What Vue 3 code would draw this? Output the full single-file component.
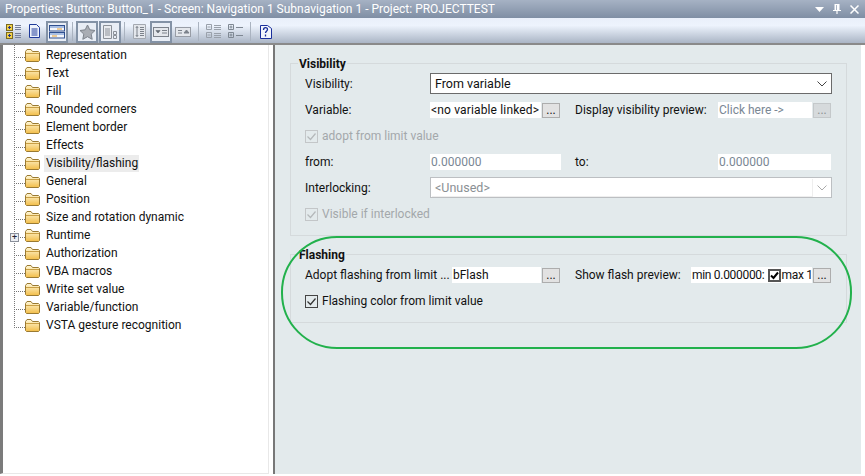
<script setup>
const nodes = [
  "Representation", "Text", "Fill", "Rounded corners", "Element border", "Effects",
  "Visibility/flashing", "General", "Position", "Size and rotation dynamic", "Runtime",
  "Authorization", "VBA macros", "Write set value", "Variable/function", "VSTA gesture recognition",
];
</script>

<template>
  <div class="window">
    <header class="titlebar">
      <span>Properties: Button: Button_1 - Screen: Navigation 1 Subnavigation 1 - Project: PROJECTTEST</span>
      <div class="title-icons">
        <svg width="9" height="5" viewBox="0 0 9 5"><path d="M0 0h9L4.500 5z" fill="#fff" /></svg>
        <svg width="8" height="10" viewBox="0 0 8 10"><path d="M1.500 0h5v6H8v1H0V6h1.500zM3 1v5h.8V1zM3.400 7h1.200v3H3.400z" fill="#fff" fill-rule="evenodd" /></svg>
        <svg width="9" height="9" viewBox="0 0 9 9"><path d="M.5.500l8 8M8.500.500l-8 8" stroke="#fff" stroke-width="1.500" /></svg>
      </div>
    </header>

    <div class="toolbar">
      <div class="tool">
        <svg width="16" height="15" viewBox="0 0 16 15">
          <rect x=".5" y=".5" width="6" height="6" fill="#f3d24a" stroke="#7a6a20" />
          <rect x=".5" y="8.500" width="6" height="6" fill="#f3d24a" stroke="#7a6a20" />
          <path d="M2 3.500h3M3.500 2v3M2 11.500h3M3.500 10v3" stroke="#26348c" />
          <path d="M9 1.500h6M9 3.500h6M9 5.500h6M9 9.500h6M9 11.500h6M9 13.500h6" stroke="#76809a" />
        </svg>
      </div>
      <div class="tool narrow">
        <svg width="13" height="15" viewBox="0 0 13 15">
          <path d="M2.500 2.500h8v12h-8z" fill="#b9bfe8" />
          <path d="M.5.500h7l3 3v10h-10z" fill="#eef3fb" stroke="#1e3a9a" />
          <path d="M2.500 5h6M2.500 7h6M2.500 9h6M2.500 11h6" stroke="#1e3a9a" />
        </svg>
      </div>
      <div class="tool active">
        <svg width="16" height="14" viewBox="0 0 16 14">
          <rect x=".5" y=".5" width="15" height="5.500" fill="#f4f6fb" stroke="#2f4f8f" />
          <path d="M1 2h14" stroke="#5f88cc" />
          <path d="M8 4h5" stroke="#e8a030" />
          <rect x=".5" y="7.500" width="15" height="5.500" fill="#f4f6fb" stroke="#2f4f8f" />
          <path d="M1 9h14" stroke="#5f88cc" />
          <path d="M3 11h5" stroke="#e8a030" />
        </svg>
      </div>
      <i class="tool-sep sep-a"></i>
      <div class="tool active off">
        <svg width="17" height="16" viewBox="0 0 17 16"><path d="M8.500 1l2.300 4.800 5.200.7-3.800 3.600 1 5.200-4.700-2.600-4.700 2.600 1-5.200L1 6.500l5.200-.7z" fill="#a9adb4" stroke="#7d838c" /></svg>
      </div>
      <div class="tool active off doc-tool">
        <svg width="16" height="16" viewBox="0 0 16 16">
          <path d="M1.500 1.500h8v13h-8z" fill="#e9ebef" stroke="#8b9098" />
          <path d="M3 5h5M3 7h5M3 9h5M3 11h5" stroke="#8b9098" />
          <path d="M11.500 7.500h3v3h-3zM11.500 11.500h3v3h-3z" fill="none" stroke="#8b9098" />
        </svg>
      </div>
      <i class="tool-sep sep-b"></i>
      <div class="tool narrow off">
        <svg width="13" height="15" viewBox="0 0 13 15">
          <path d="M.5.500h12v14H.5z" fill="#e4e7ec" stroke="#a4a9b1" />
          <path d="M4 2.500v10M2.800 4L4 2.500 5.200 4M2.800 11L4 12.500 5.200 11M7 3.500h4M7 5.500h4M7 7.500h4M7 9.500h4M7 11.500h4" fill="none" stroke="#7c828b" />
        </svg>
      </div>
      <div class="tool active off">
        <svg width="16" height="10" viewBox="0 0 16 10">
          <rect x=".5" y=".5" width="15" height="9" fill="#e4e7ec" stroke="#7c828b" />
          <path d="M3 3.500h4L5 6zM9 3.500h5M9 6h5" fill="#596069" stroke="#7c828b" />
        </svg>
      </div>
      <div class="tool off">
        <svg width="16" height="10" viewBox="0 0 16 10">
          <rect x=".5" y=".5" width="15" height="9" fill="#e4e7ec" stroke="#989da6" />
          <path d="M3 3.500h4M3 6h4M9 6h5L11.500 3z" fill="#7c828b" stroke="#7c828b" />
        </svg>
      </div>
      <i class="tool-sep"></i>
      <div class="tool narrow off">
        <svg width="15" height="15" viewBox="0 0 15 15">
          <path d="M.5.500h5v5h-5zM.5 8.500h5v5h-5zM8 1.500h7M8 3.500h7M8 5.500h7M8 9.500h7M8 11.500h7M8 13.500h7M1.500 3h3M1.500 11h3" fill="none" stroke="#99a0aa" />
        </svg>
      </div>
      <div class="tool off">
        <svg width="15" height="15" viewBox="0 0 15 15">
          <path d="M.5.500h5v5h-5zM.5 8.500h5v5h-5zM8 3.500h7M8 11.500h7M1.500 3h3M3 1.500v3M1.500 11h3M3 9.500v3" fill="none" stroke="#7f8893" />
        </svg>
      </div>
      <i class="tool-sep"></i>
      <div class="tool narrow">
        <svg width="12" height="16" viewBox="0 0 12 16">
          <path d="M.5 1.500h7l4 3v10H.5z" fill="#f3f6fc" stroke="#1a2f9c" />
          <path d="M3.500 6c0-3 4-3 4-.5 0 1.700-2 1.700-2 3.500M5.500 10.500v2" fill="none" stroke="#1a2f9c" stroke-width="1.300" />
        </svg>
      </div>
    </div>

    <div class="body">
      <nav class="tree">
        <ul class="nodes">
          <li v-for="name in nodes" :key="name" class="node">
            <span class="expander" v-if="name === 'Runtime'">+</span>
            <svg class="folder" width="15" height="13" viewBox="0 0 15 13">
              <defs>
                <linearGradient id="fold" x1="0" y1="0" x2="0" y2="1">
                  <stop offset="0" stop-color="#fff8d8" />
                  <stop offset="1" stop-color="#f2bd48" />
                </linearGradient>
              </defs>
              <path d="M.5 11.500v-9l1.500-2h4l1.500 2h6l1 1v8l-1 1h-12z" fill="url(#fold)" stroke="#9a7a32" />
              <path d="M1 4.500h13" stroke="#c99f45" />
            </svg>
            <span class="node-label" :class="{ selected: name === 'Visibility/flashing' }">{{ name }}</span>
          </li>
        </ul>
      </nav>

      <main class="panel">
        <section class="group group-visibility">
          <h3>Visibility</h3>
          <div class="row row-top">
            <label>Visibility:</label>
            <div class="combo">From variable
              <svg width="10" height="6" viewBox="0 0 10 6"><path d="M.5.500L5 5 9.500.500" fill="none" stroke="#444" /></svg>
            </div>
          </div>
          <div class="row row-fields">
            <label>Variable:</label>
            <div class="input-btn">
              <span class="input wide-text">&lt;no variable linked&gt;</span><button>...</button>
            </div>
            <label class="second">Display visibility preview:</label>
            <div class="input-btn">
              <span class="input muted">Click here -&gt;</span><button disabled>...</button>
            </div>
          </div>
          <div class="check off row-adopt">
            <span class="box"><svg width="11" height="11" viewBox="0 0 11 11"><path d="M1.500 5.500l3 3 5-6" fill="none" stroke="currentColor" stroke-width="1.200" /></svg></span>adopt from limit value
          </div>
          <div class="row row-fields row-from">
            <label>from:</label>
            <span class="input muted">0.000000</span>
            <label class="second">to:</label>
            <span class="input muted end-input">0.000000</span>
          </div>
          <div class="row row-top row-lock">
            <label>Interlocking:</label>
            <div class="combo off"><span class="combo-text">&lt;Unused&gt;</span>
              <svg width="10" height="6" viewBox="0 0 10 6"><path d="M.5.500L5 5 9.500.500" fill="none" stroke="#aaa" /></svg>
            </div>
          </div>
          <div class="check off row-vis">
            <span class="box"><svg width="11" height="11" viewBox="0 0 11 11"><path d="M1.500 5.500l3 3 5-6" fill="none" stroke="currentColor" stroke-width="1.200" /></svg></span>Visible if interlocked
          </div>
        </section>

        <section class="group group-flash">
          <h3>Flashing</h3>
          <div class="row row-flash">
            <label>Adopt flashing from limit ...</label>
            <div class="input-btn">
              <span class="input">bFlash</span><button>...</button>
            </div>
            <label class="second">Show flash preview:</label>
            <div class="input-btn">
              <span class="input preview">min 0.000000:<span class="box dark"><svg width="9" height="9" viewBox="0 0 9 9"><path d="M1 4.500l2.500 2.500L8 1.500" fill="none" stroke="currentColor" stroke-width="2" /></svg></span>max 1</span><button>...</button>
            </div>
          </div>
          <div class="check row-color">
            <span class="box strong"><svg width="11" height="11" viewBox="0 0 11 11"><path d="M1.500 5.500l3 3 5-6" fill="none" stroke="currentColor" stroke-width="1.200" /></svg></span>Flashing color from limit value
          </div>
        </section>

        <div class="highlight"></div>
      </main>
    </div>
  </div>
</template>

<style>
body {
  margin: 0;
  background: #fff;
}
</style>

<style scoped>
.window {
  width: 865px;
  height: 476px;
  display: flex;
  flex-direction: column;
  overflow: hidden;
  font-family: Roboto, "Liberation Sans", sans-serif;
  font-size: 12px;
  color: #111;
}
.titlebar {
  height: 18px;
  flex: none;
  padding-left: 5px;
  display: flex;
  align-items: center;
  justify-content: space-between;
  background: linear-gradient(#a6b2c4, #7f8ea4);
  color: #fff;
  line-height: 18px;
}
.title-icons {
  display: flex;
  align-items: center;
  gap: 9px;
  padding-right: 6px;
}
.toolbar {
  height: 27px;
  flex: none;
  display: flex;
  align-items: center;
  padding: 2px 0 0 3px;
  background: linear-gradient(#e9effa 0, #edf3fd 30%, #aab5c5 100%);
  border-bottom: 2px solid #8a8a8a;
  box-sizing: border-box;
}
.tool {
  width: 22px;
  height: 22px;
  flex: none;
  display: flex;
  align-items: center;
  justify-content: center;
  box-sizing: border-box;
}
.tool.narrow {
  width: 21px;
}
.tool.active {
  border: 2px solid #8392a6;
  background: #e8edf5;
}
.doc-tool {
  margin-left: 1px;
}
.tool-sep {
  width: 1px;
  height: 19px;
  flex: none;
  margin: 0 4px;
  background: #aab3c0;
}
.tool-sep.sep-a {
  margin: 0 3px 0 4px;
}
.tool-sep.sep-b {
  margin: 0 4px 0 3px;
}
.body {
  flex: 1;
  display: flex;
  min-height: 0;
  padding-bottom: 2px;
}
.tree {
  width: 265px;
  flex: none;
  border-left: 3px solid #7b7b7b;
  border-right: 1px solid #e8e8e8;
  border-bottom: 1px solid #e8e8e8;
  background: #fff;
}
.nodes {
  list-style: none;
  margin: 0;
  padding: 1px 0 0;
  background: repeating-linear-gradient(#777 0 1px, transparent 1px 2px) 11px 0 / 1px 281px no-repeat;
}
.node {
  position: relative;
  height: 18px;
  display: flex;
  align-items: center;
  padding-left: 22px;
  background: repeating-linear-gradient(90deg, #777 0 1px, transparent 1px 2px) 11px 11px / 11px 1px no-repeat;
}
.expander {
  position: absolute;
  left: 7px;
  top: 7px;
  width: 9px;
  height: 9px;
  border: 1px solid #8a8f9a;
  background: #eceef2;
  box-sizing: border-box;
  font-size: 9px;
  line-height: 7px;
  text-align: center;
  color: #223;
}
.folder {
  flex: none;
  margin-right: 4px;
}
.node-label {
  padding: 0 1px 0 2px;
  line-height: 17px;
}
.node-label.selected {
  background: #ececec;
}
.panel {
  flex: 1;
  position: relative;
  margin-left: 4px;
  margin-right: 4px;
  padding: 18px 14px 0 15px;
  border-left: 2px solid #777;
  background: #e3eaec;
}
.group {
  border: 1px solid #d5dadc;
  padding: 0 0 0 14px;
  height: 171px;
}
.group h3 {
  display: block;
  width: fit-content;
  margin: -8px 0 0 -7px;
  padding: 0 1px;
  height: 16px;
  line-height: 16px;
  font-size: 12px;
  font-weight: 700;
  color: #111;
  background: #e3eaec;
}
.group-flash {
  margin-top: 18px;
  height: 67px;
}
.row {
  display: grid;
  align-items: center;
}
.row label {
  white-space: nowrap;
}
.row-top {
  grid-template-columns: 125px 402px;
  height: 21px;
  margin-top: 1px;
}
.row-fields {
  grid-template-columns: 125px 131px 157px 114px;
  height: 16px;
  margin-top: 8px;
}
.row-fields .second {
  padding-left: 14px;
}
.row-from {
  margin-top: 11px;
}
.row-lock {
  margin-top: 7px;
}
.row-flash {
  grid-template-columns: 147px 109px 130px 141px;
  height: 16px;
  margin-top: 4px;
}
.row-flash .second {
  padding-left: 14px;
}
.combo {
  height: 21px;
  box-sizing: border-box;
  display: flex;
  align-items: center;
  justify-content: space-between;
  padding: 0 4px;
  background: #fff;
  border: 1px solid #6b6b6b;
  font-size: 12.5px;
}
.combo.off {
  border-color: #bcbfc2;
  padding-left: 1px;
  color: #8a8f94;
}
.combo-text {
  flex: 1;
  height: 17px;
  line-height: 17px;
  padding-left: 3px;
  margin-right: 4px;
  border-right: 1px solid #eee;
  border-bottom: 1px solid #eee;
}
.input-btn {
  display: flex;
  align-items: center;
}
.input {
  flex: 1;
  height: 16px;
  line-height: 16px;
  padding-left: 1px;
  background: #fff;
  white-space: nowrap;
  overflow: hidden;
  display: block;
  min-width: 0;
}
.input.muted {
  color: #7a8794;
}
.wide-text {
  letter-spacing: 0.15px;
}
.end-input {
  margin-right: 1px;
}
button {
  width: 18px;
  height: 15px;
  margin: 0 1px;
  padding: 0;
  flex: none;
  border: 1px solid #adadad;
  background: #e2e2e2;
  font: inherit;
  line-height: 13px;
  color: #111;
}
button:disabled {
  background: #d6dadc;
  border-color: #c4c8ca;
  color: #8b8f92;
}
.preview {
  display: flex;
  align-items: center;
  letter-spacing: -0.3px;
}
.check {
  display: flex;
  align-items: center;
  height: 14px;
}
.check.off {
  color: #a3a8ab;
}
.row-adopt {
  margin-top: 11px;
}
.row-vis {
  margin-top: 9px;
}
.row-color {
  margin-top: 11px;
}
.box {
  width: 13px;
  height: 13px;
  flex: none;
  box-sizing: border-box;
  margin-right: 4px;
  display: inline-flex;
  align-items: center;
  justify-content: center;
  border: 1px solid #c3c6c8;
  background: #e3eaec;
  color: #b4b8ba;
}
.box.strong {
  border-color: #444;
  color: #333;
}
.box.dark {
  margin: 0 0 0 4px;
  border: 2px solid #555;
  background: #fff;
  color: #000;
}
.highlight {
  position: absolute;
  left: 6px;
  top: 191px;
  width: 571px;
  height: 113px;
  box-sizing: border-box;
  border: 2px solid #22b14c;
  border-radius: 56px;
  pointer-events: none;
}
</style>
